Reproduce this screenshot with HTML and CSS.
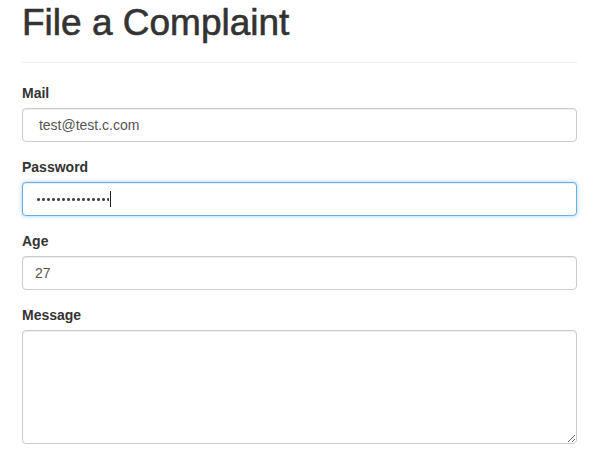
FILE: index.html
```html
<!DOCTYPE html>
<html lang="en">
<head>
<meta charset="utf-8">
<title>File a Complaint</title>
<link rel="stylesheet" href="styles.css">
</head>
<body>
<main class="page">
  <h1 class="title">File a Complaint</h1>
  <hr class="divider">
  <form class="form">
    <div class="group">
      <label class="label" for="mail">Mail</label>
      <input class="control" id="mail" type="text" value=" test@test.c.com">
    </div>
    <div class="group">
      <label class="label" for="password">Password</label>
      <div class="control focused" id="password" role="textbox" aria-label="Password">
        <span class="dots"></span><span class="caret"></span>
      </div>
    </div>
    <div class="group">
      <label class="label" for="age">Age</label>
      <input class="control" id="age" type="text" value="27">
    </div>
    <div class="group">
      <label class="label" for="message">Message</label>
      <textarea class="control area" id="message" rows="5"></textarea>
    </div>
  </form>
</main>
</body>
</html>
```
FILE: styles.css
```css
* { box-sizing: border-box; }
html, body { margin: 0; padding: 0; background: #fff; }
body {
  font-family: "Liberation Sans", Arial, sans-serif;
  font-size: 14px;
  line-height: 20px;
  color: #333;
}
.page {
  padding: 0 14px 0 22px;
}
.title {
  margin: 3px 0 0 0;
  font-size: 37px;
  line-height: 40px;
  font-weight: 400;
  color: #333;
  -webkit-text-stroke: 0.6px #333;
}
.divider {
  margin: 19px 0 20px 0;
  border: 0;
  border-top: 1px solid #eee;
  height: 0;
}
.form { margin: 0; }
.group {
  margin-bottom: 15px;
  display: flex;
  flex-direction: column;
}
.label {
  display: block;
  font-weight: 700;
  margin-bottom: 5px;
  line-height: 20px;
  color: #333;
}
.control {
  display: block;
  width: 100%;
  height: 34px;
  padding: 6px 12px;
  font-family: "Liberation Sans", Arial, sans-serif;
  font-size: 14px;
  line-height: 20px;
  color: #555;
  background: #fff;
  border: 1px solid #ccc;
  border-radius: 4px;
  box-shadow: inset 0 1px 1px rgba(0,0,0,.075);
  outline: none;
  margin: 0;
}
.focused {
  border-color: #66afe9;
  box-shadow: inset 0 1px 1px rgba(0,0,0,.075), 0 0 4px rgba(102,175,233,.6);
  display: flex;
  align-items: center;
  padding-left: 13px;
}
.dots {
  display: inline-block;
  width: 73px;
  height: 3px;
  background-image: radial-gradient(circle, #444 0 1.3px, transparent 1.6px);
  background-size: 5px 3px;
  background-position: 0 0;
}
.caret {
  display: inline-block;
  width: 1px;
  height: 16px;
  margin-left: 1px;
  background: #222;
}
.area {
  height: 114px;
  resize: vertical;
}
```
